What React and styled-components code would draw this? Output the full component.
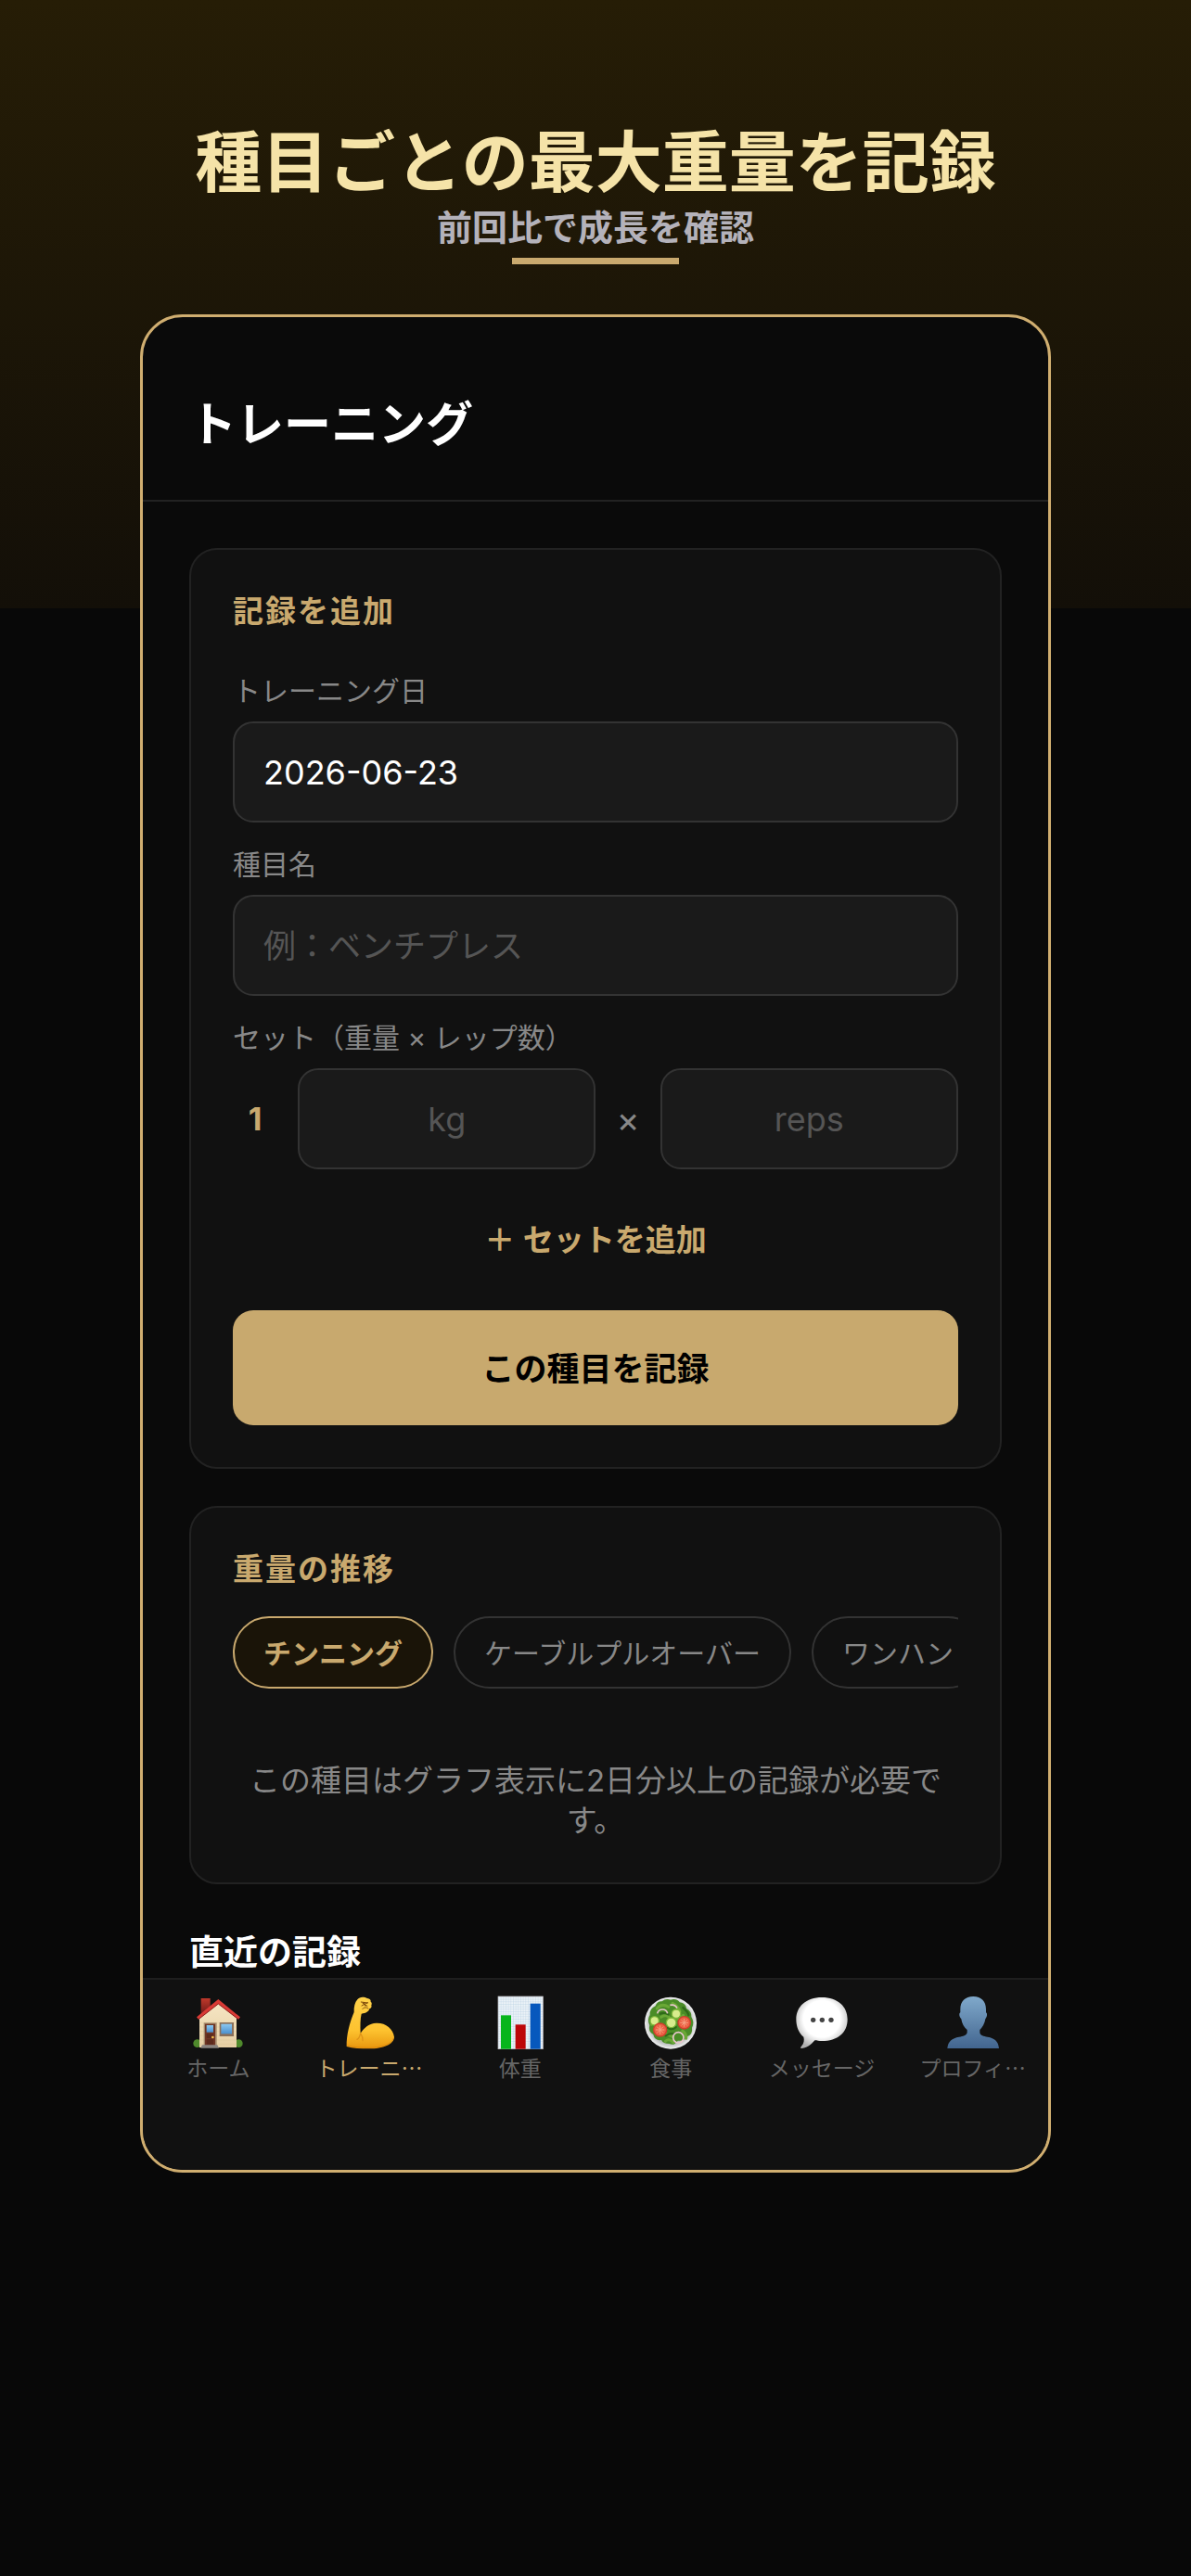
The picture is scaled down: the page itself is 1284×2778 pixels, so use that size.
import React, { useState } from "react";
import styled, { createGlobalStyle } from "styled-components";

// --- Global Styles ---
const GlobalStyle = createGlobalStyle`
  :root {
    --bg: #080808;
    --screen: #0a0a0a;
    --card: #111111;
    --field: #1a1a1a;
    --gold: #c9a96e;
    --line: #222222;
    --line-strong: #333333;
    --muted: #888888;
    --faint: #555555;
  }

  * {
    box-sizing: border-box;
    margin: 0;
    padding: 0;
  }

  body {
    background: var(--bg);
    color: #ffffff;
    font-family: Inter, "Noto Sans CJK JP", sans-serif;
    -webkit-font-smoothing: antialiased;
  }

  button, input {
    font-family: inherit;
  }
`;

// --- Page ---
const Page = styled.div`
  min-height: 100vh;
  padding: 126px 151px 48px;
  background: linear-gradient(#261d06, #130f08) no-repeat top / 100% 656px;
`;

const Hero = styled.header`
  display: flex;
  flex-direction: column;
  align-items: center;
  margin-bottom: 54px;
  font-family: "Noto Sans CJK JP", sans-serif;
  text-align: center;
`;

const Headline = styled.h1`
  margin-bottom: 2px;
  font-size: 72px;
  font-weight: 700;
  line-height: 88px;
  color: #f5e3a8;
`;

const Subline = styled.p`
  font-size: 38px;
  font-weight: 700;
  line-height: 54px;
  color: #b4b2ba;
`;

const Rule = styled.div`
  width: 180px;
  height: 7px;
  margin-top: 8px;
  background: var(--gold);
`;

// --- Phone screen ---
const Screen = styled.div`
  overflow: hidden;
  background: var(--screen);
  border: 3px solid #d0ae70;
  border-radius: 46px;
`;

const TopBar = styled.div`
  padding: 84px 50px 49px;
  border-bottom: 2px solid var(--line);
`;

const ScreenTitle = styled.h2`
  font-size: 51px;
  font-weight: 700;
  line-height: 64px;
`;

const Content = styled.main`
  display: flex;
  flex-direction: column;
  padding: 50px 50px 3px;
`;

const Card = styled.section`
  padding: 45px;
  margin-bottom: 40px;
  background: var(--card);
  border: 2px solid var(--line);
  border-radius: 30px;
`;

const CardTitle = styled.h3`
  margin-bottom: ${(p) => (p.$tight ? "30px" : "46px")};
  font-size: 33px;
  font-weight: 600;
  line-height: 42px;
  letter-spacing: 2px;
  color: var(--gold);
`;

// --- Form ---
const Form = styled.form`
  display: flex;
  flex-direction: column;
  gap: 26px;
`;

const Field = styled.div`
  display: flex;
  flex-direction: column;
  gap: 13px;
`;

const Label = styled.label`
  font-size: 30px;
  line-height: 39px;
  color: var(--muted);
`;

const Input = styled.input`
  width: 100%;
  min-width: 0;
  height: 109px;
  padding: 0 31px;
  font-size: 36px;
  color: #ffffff;
  text-align: ${(p) => (p.$center ? "center" : "left")};
  background: var(--field);
  border: 2px solid var(--line-strong);
  border-radius: 22px;
  outline: none;

  &::placeholder {
    font-size: ${(p) => (p.$center ? "36px" : "35px")};
    color: var(--faint);
    opacity: 1;
  }
`;

const SetRow = styled.div`
  display: flex;
  align-items: center;
  gap: 22px;
`;

const SetNumber = styled.span`
  flex: 0 0 48px;
  font-size: 34px;
  font-weight: 700;
  text-align: center;
  color: var(--gold);
`;

const Times = styled.span`
  flex: 0 0 20px;
  display: flex;
  justify-content: center;
  font-size: 38px;
  color: var(--muted);
`;

const AddSetButton = styled.button`
  padding: 26px 0;
  font-size: 33px;
  font-weight: 600;
  line-height: 48px;
  color: var(--gold);
  background: none;
  border: none;
  cursor: pointer;
`;

const SubmitButton = styled.button`
  height: 124px;
  padding-bottom: 3px;
  font-size: 35px;
  font-weight: 700;
  color: #000000;
  background: #c8a96e;
  border: none;
  border-radius: 22px;
  cursor: pointer;
`;

// --- Weight history ---
const Chips = styled.div`
  display: flex;
  gap: 22px;
  overflow: hidden;
`;

const Chip = styled.button`
  flex: none;
  height: 78px;
  padding: 0 31px 3px;
  font-size: 30px;
  font-weight: ${(p) => (p.$active ? 600 : 400)};
  color: ${(p) => (p.$active ? "var(--gold)" : "var(--muted)")};
  background: ${(p) => (p.$active ? "#1a1408" : "transparent")};
  border: 2px solid ${(p) => (p.$active ? "var(--gold)" : "var(--line-strong)")};
  border-radius: 39px;
  cursor: pointer;
`;

const EmptyText = styled.p`
  margin-top: 78px;
  font-size: 33px;
  line-height: 43px;
  text-align: center;
  color: var(--muted);
`;

const SectionTitle = styled.h3`
  margin-top: 10px;
  font-size: 37px;
  font-weight: 700;
  line-height: 48px;
`;

// --- Tab bar ---
const TabBar = styled.nav`
  display: grid;
  grid-template-columns: repeat(6, 1fr);
  padding: 15px 0 96px;
  background: var(--card);
  border-top: 2px solid #1e1e1e;
`;

const Tab = styled.a`
  display: flex;
  flex-direction: column;
  align-items: center;
  gap: 4px;
  font-family: "Noto Sans CJK JP", sans-serif;
  font-size: 23px;
  line-height: 30px;
  white-space: nowrap;
  text-decoration: none;
  color: ${(p) => (p.$active ? "var(--gold)" : "#666666")};

  svg {
    width: 60px;
    height: 60px;
  }
`;

// --- Tab icons ---
const HomeIcon = () => (
  <svg viewBox="165 120 180 180" aria-hidden="true">
    <defs>
      <linearGradient id="wall" x1="0" y1="0" x2="0" y2="1">
        <stop offset="0" stopColor="#f6e6c4" />
        <stop offset="1" stopColor="#e6cfa4" />
      </linearGradient>
      <linearGradient id="chimney" x1="0" y1="0" x2="0" y2="1">
        <stop offset="0" stopColor="#c0392b" />
        <stop offset="1" stopColor="#6f1a18" />
      </linearGradient>
      <linearGradient id="pane" x1="0" y1="0" x2="0" y2="1">
        <stop offset="0" stopColor="#8cc8f0" />
        <stop offset="1" stopColor="#4a8fce" />
      </linearGradient>
    </defs>
    <rect x="200" y="135" width="30" height="50" fill="url(#chimney)" />
    <circle cx="188" cy="281" r="13" fill="#4f8a2c" />
    <circle cx="322" cy="281" r="13" fill="#4f8a2c" />
    <path d="M195 198 L256 150 L315 198 V294 H195Z" fill="url(#wall)" />
    <path d="M196 214H314M196 228H314M196 242H314M196 256H314M196 270H314M196 283H314" stroke="#d9c193" strokeWidth="1" />
    <path d="M186 196 L256 138 L327 196 L321 203 L256 153 L192 203Z" fill="#d93a35" />
    <path d="M192 203 L256 153 L321 203" fill="none" stroke="#8f1d1c" strokeWidth="3" />
    <rect x="209" y="214" width="42" height="76" fill="#a58a6c" />
    <rect x="213" y="218" width="33" height="72" fill="#6e3524" />
    <rect x="218" y="222" width="22" height="23" fill="url(#pane)" />
    <path d="M218 250H240V264H218ZM218 268H240V284H218Z" fill="#5c2a1c" />
    <circle cx="238" cy="261" r="4" fill="#f3c04b" />
    <path d="M204 286H253L258 296H199Z" fill="#8b8580" />
    <rect x="260" y="213" width="46" height="45" fill="#8a705a" />
    <rect x="265" y="218" width="35" height="32" fill="url(#pane)" />
  </svg>
);

const ArmIcon = () => (
  <svg viewBox="655 120 180 180" aria-hidden="true">
    <defs>
      <linearGradient id="skin" x1="0" y1="0" x2="0" y2="1">
        <stop offset="0" stopColor="#ffd24a" />
        <stop offset="0.65" stopColor="#fdc22f" />
        <stop offset="1" stopColor="#e8960e" />
      </linearGradient>
    </defs>
    <path
      d="M696 180 C695 163 699 148 707 139 C714 129 728 129 739 135 C747 136 751 140 750 146 C754 149 754 154 752 157 C754 163 751 168 746 169 C744 178 735 183 720 185 C716 202 716 222 717 248 C729 230 745 215 768 215 C799 214 822 233 826 260 C825 284 790 298 745 298 C718 298 692 297 672 291 C671 253 683 210 696 180Z"
      fill="url(#skin)"
    />
    <path d="M717 248 C715 258 714 264 706 268 M717 248 C722 256 725 262 724 272" fill="none" stroke="#df9418" strokeWidth="4" strokeLinecap="round" />
    <path d="M719 147 L740 150 M721 159 L740 149 M727 148 L733 160 M739 160 L724 151 M742 168 C735 163 728 164 724 169" fill="none" stroke="#7d4a0c" strokeWidth="3" strokeLinecap="round" />
    <path d="M674 287 C690 293 720 295 745 295 C785 294 818 284 824 264" fill="none" stroke="#d98108" strokeWidth="3" opacity="0.6" />
  </svg>
);

const ChartIcon = () => (
  <svg viewBox="150 120 180 180" aria-hidden="true">
    <defs>
      <pattern id="grid" x="168" y="129" width="8" height="8" patternUnits="userSpaceOnUse">
        <rect width="8" height="8" fill="#edf3f8" />
        <path d="M8 0H0V8" fill="none" stroke="#b3cce0" strokeWidth="2" />
      </pattern>
    </defs>
    <rect x="168" y="129" width="145" height="170" fill="url(#grid)" stroke="#c9c4c8" strokeWidth="2" />
    <rect x="177" y="190" width="33" height="109" fill="#07b51c" />
    <rect x="224" y="220" width="33" height="79" fill="#bd0709" />
    <rect x="272" y="152" width="33" height="147" fill="#0758bd" />
  </svg>
);

const SaladIcon = () => (
  <svg viewBox="639 120 180 180" aria-hidden="true">
    <defs>
      <radialGradient id="plate">
        <stop offset="0.8" stopColor="#b9bcbc" />
        <stop offset="1" stopColor="#f2f3f3" />
      </radialGradient>
    </defs>
    <circle cx="729" cy="215" r="84" fill="url(#plate)" />
    <path
      d="M680 160 Q685 144 701 145 Q713 134 729 140 Q748 134 758 148 Q779 151 780 168 Q798 178 796 195 Q807 213 798 230 Q801 252 783 258 Q774 275 752 272 Q741 290 725 282 Q704 282 699 270 Q677 273 673 252 Q655 243 661 222 Q652 203 662 189 Q660 169 680 160Z"
      fill="#4a8c27"
    />
    <path d="M685 168Q700 149 722 163M735 151Q754 160 759 178M667 220Q682 211 692 222M698 196Q716 183 730 204M744 204Q759 203 770 190M700 253Q714 246 737 260M767 240Q781 250 779 265M712 274Q724 263 738 278" fill="none" stroke="#6aa836" strokeWidth="9" strokeLinecap="round" />
    <path d="M695 185Q709 179 721 187M720 230Q733 239 746 228M713 256Q727 246 742 251M769 165Q785 179 787 190" fill="none" stroke="#2e6a19" strokeWidth="7" strokeLinecap="round" />
    <g fill="#d8ec8d" stroke="#7fb83b" strokeWidth="4">
      <circle cx="677" cy="208" r="14" />
      <circle cx="747" cy="185" r="14" />
      <circle cx="731" cy="214" r="16" />
    </g>
    <g fill="none" stroke="#e9c6cc" strokeWidth="5">
      <path d="M686 184 A17 17 0 0 1 719 184" />
      <path d="M727 157 Q743 153 750 167" />
      <circle cx="754" cy="262" r="17" />
    </g>
    <g fill="#ec6145" stroke="#cf3f2c" strokeWidth="4">
      <circle cx="695" cy="237" r="21" />
      <circle cx="773" cy="214" r="20" />
    </g>
    <path d="M695 223V251M681 237H709M685 227L705 247M705 227L685 247M773 201V227M760 214H786M764 205L782 223M782 205L764 223" stroke="#f6a182" strokeWidth="3" />
  </svg>
);

const MessageIcon = () => (
  <svg viewBox="166 120 180 180" aria-hidden="true">
    <defs>
      <radialGradient id="bubble" cx="0.5" cy="0.42" r="0.6">
        <stop offset="0.6" stopColor="#ffffff" />
        <stop offset="1" stopColor="#b0b0b0" />
      </radialGradient>
    </defs>
    <path
      d="M256 132 C308 132 339 162 339 203 C339 246 307 273 256 273 C248 273 240 273 233 271 C221 286 205 297 189 297 C186 296 187 293 191 289 C198 281 200 270 197 260 C181 246 173 226 173 203 C173 162 205 132 256 132Z"
      fill="url(#bubble)"
    />
    <g fill="#444444">
      <circle cx="228" cy="205" r="8" />
      <circle cx="257" cy="205" r="8" />
      <circle cx="286" cy="205" r="8" />
    </g>
  </svg>
);

const ProfileIcon = () => (
  <svg viewBox="654 120 180 180" aria-hidden="true">
    <defs>
      <linearGradient id="person" x1="0" y1="0" x2="0" y2="1">
        <stop offset="0" stopColor="#80a9cb" />
        <stop offset="1" stopColor="#42658f" />
      </linearGradient>
    </defs>
    <path
      d="M745 129 C771 129 786 145 786 170 L786 181 C791 183 790 195 784 202 C782 217 774 229 766 237 V246 C768 256 778 258 791 260 C814 264 826 274 828 297 H661 C663 274 676 264 699 260 C712 258 722 256 725 246 V237 C715 229 708 217 706 202 C699 195 698 183 703 181 L703 170 C703 145 718 129 745 129Z"
      fill="url(#person)"
    />
  </svg>
);

const exercises = ["チンニング", "ケーブルプルオーバー", "ワンハン"];

const tabs = [
  { label: "ホーム", Icon: HomeIcon },
  { label: "トレーニ…", Icon: ArmIcon, active: true },
  { label: "体重", Icon: ChartIcon },
  { label: "食事", Icon: SaladIcon },
  { label: "メッセージ", Icon: MessageIcon },
  { label: "プロフィ…", Icon: ProfileIcon },
];

const App = () => {
  const [selected, setSelected] = useState(exercises[0]);

  return (
    <>
      <GlobalStyle />
      <Page>
        <Hero>
          <Headline>種目ごとの最大重量を記録</Headline>
          <Subline>前回比で成長を確認</Subline>
          <Rule />
        </Hero>

        <Screen>
          <TopBar>
            <ScreenTitle>トレーニング</ScreenTitle>
          </TopBar>

          <Content>
            <Card>
              <CardTitle>記録を追加</CardTitle>
              <Form onSubmit={(e) => e.preventDefault()}>
                <Field>
                  <Label htmlFor="date">トレーニング日</Label>
                  <Input id="date" type="text" defaultValue="2026-06-23" />
                </Field>
                <Field>
                  <Label htmlFor="exercise">種目名</Label>
                  <Input id="exercise" type="text" placeholder="例：ベンチプレス" />
                </Field>
                <Field>
                  <Label htmlFor="weight">セット（重量 × レップ数）</Label>
                  <SetRow>
                    <SetNumber>1</SetNumber>
                    <Input id="weight" $center inputMode="decimal" placeholder="kg" />
                    <Times>×</Times>
                    <Input $center inputMode="numeric" placeholder="reps" aria-label="reps" />
                  </SetRow>
                </Field>
                <AddSetButton type="button">＋ セットを追加</AddSetButton>
                <SubmitButton type="submit">この種目を記録</SubmitButton>
              </Form>
            </Card>

            <Card>
              <CardTitle $tight>重量の推移</CardTitle>
              <Chips>
                {exercises.map((name) => (
                  <Chip
                    key={name}
                    type="button"
                    $active={name === selected}
                    onClick={() => setSelected(name)}
                  >
                    {name}
                  </Chip>
                ))}
              </Chips>
              <EmptyText>
                この種目はグラフ表示に2日分以上の記録が必要です。
              </EmptyText>
            </Card>

            <SectionTitle>直近の記録</SectionTitle>
          </Content>

          <TabBar>
            {tabs.map(({ label, Icon, active }) => (
              <Tab key={label} href="#" $active={active}>
                <Icon />
                {label}
              </Tab>
            ))}
          </TabBar>
        </Screen>
      </Page>
    </>
  );
};

export default App;
